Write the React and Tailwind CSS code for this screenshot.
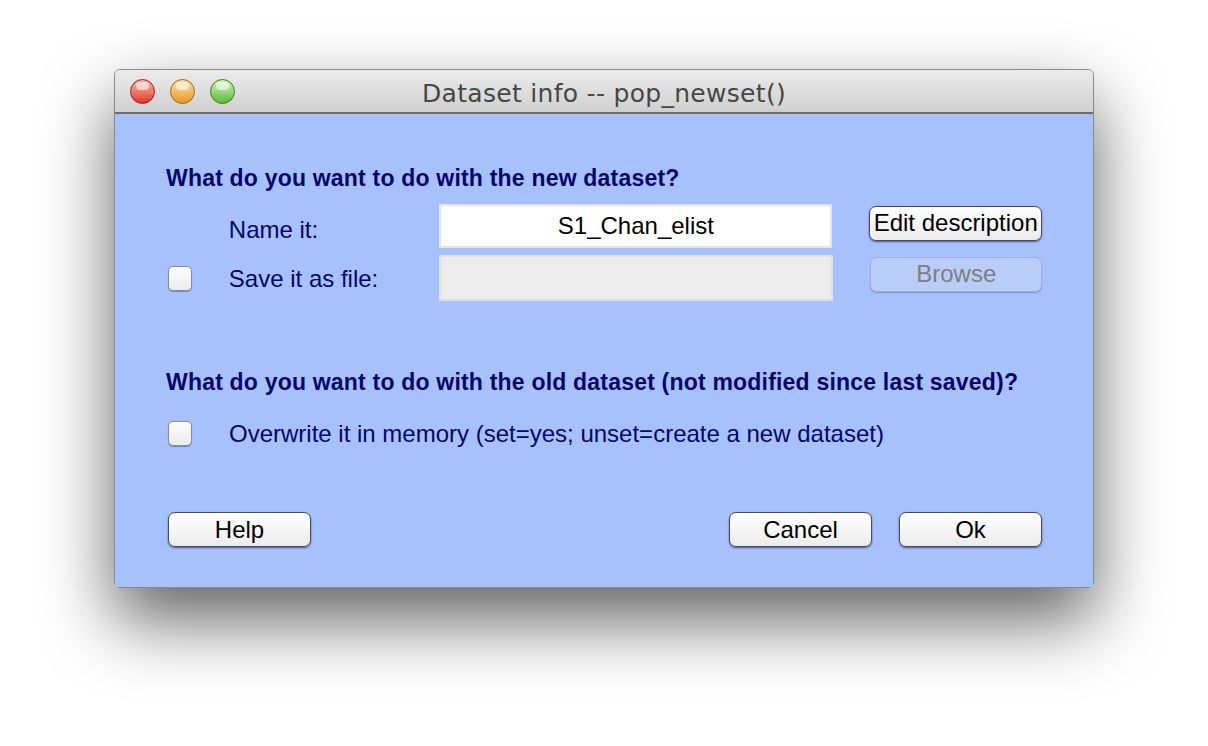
import React from "react";

const navy = "text-[#05056a]";

// mac style push button
function PushButton({ children, className = "", disabled = false }) {
  return (
    <button
      type="button"
      disabled={disabled}
      className={
        "h-[35px] rounded-[7px] text-[24px] leading-none " +
        (disabled
          ? "bg-[#b9cdf8] text-[#7f7f7f] border border-[#9fb1da] shadow-[0_1px_1px_rgba(0,0,40,0.25)] "
          : "bg-gradient-to-b from-[#ffffff] to-[#ececec] text-black border border-[#4a4a5a] shadow-[0_1px_2px_rgba(0,0,40,0.55)] ") +
        className
      }
    >
      {children}
    </button>
  );
}

function Checkbox() {
  return (
    <div className="w-[24px] h-[25px] rounded-[5px] bg-gradient-to-b from-[#ffffff] to-[#ebebeb] border border-[#8a8a9a] shadow-[0_1px_1px_rgba(0,0,40,0.3)]" />
  );
}

function Light({ from, to, ring }) {
  return (
    <div
      className={
        "relative w-[25px] h-[25px] rounded-full border bg-gradient-to-b " +
        from + " " + to + " " + ring
      }
    >
      <div className="absolute left-[5px] top-[2px] w-[13px] h-[8px] rounded-full bg-white/60" />
    </div>
  );
}

export default function App() {
  return (
    <div
      className="w-[1208px] h-[746px] bg-white pt-[69px] pl-[114px] overflow-hidden"
      style={{ fontFamily: '"Liberation Sans", Arial, sans-serif' }}
    >
      <div className="w-[980px] h-[519px] rounded-t-[6px] rounded-b-[4px] flex flex-col shadow-[0_32px_70px_rgba(0,0,0,0.62)] border border-[#8a8a8a]">
        {/* TITLE BAR */}
        <div className="relative h-[44px] flex items-center rounded-t-[6px] bg-gradient-to-b from-[#ececec] to-[#d0d0d0] border-b-2 border-[#6d6d6d]">
          <div className="flex items-center gap-[15px] pl-[15px]">
            <Light from="from-[#ffb0a8]" to="to-[#e0302a]" ring="border-[#a01e1a]" />
            <Light from="from-[#ffe0a0]" to="to-[#e49a20]" ring="border-[#a06a10]" />
            <Light from="from-[#d0f5b0]" to="to-[#5cb838]" ring="border-[#3c7c20]" />
          </div>
          <div
            className="absolute inset-0 flex items-center justify-center pt-[5px] text-[25px] tracking-[0.3px] text-[#474747]"
            style={{ fontFamily: '"DejaVu Sans", "Noto Sans", sans-serif' }}
          >
            Dataset info -- pop_newset()
          </div>
        </div>

        {/* BODY */}
        <div className="flex-1 bg-[#a7c1fd] rounded-b-[4px] pl-[51px] pr-[51px] pt-[52px] flex flex-col">
          <div className={"h-[24px] leading-[24px] text-[23px] tracking-[0.2px] font-bold " + navy}>
            What do you want to do with the new dataset?
          </div>

          <div className="mt-[14px] flex items-center h-[44px]">
            <div className="w-[63px]" />
            <div className={"w-[211px] text-[24px] leading-none pt-[8px] " + navy}>Name it:</div>
            <div className="w-[394px] h-[44px] bg-white border-2 border-[#e4e4e4] flex items-center justify-center text-[24px] text-black">
              S1_Chan_elist
            </div>
            <PushButton className="ml-[37px] w-[173px] -mt-[6px]">Edit description</PushButton>
          </div>

          <div className="mt-[7px] flex items-center h-[46px]">
            <div className="w-[63px] pl-[2px]">
              <Checkbox />
            </div>
            <div className={"w-[211px] text-[24px] leading-none pt-[2px] " + navy}>Save it as file:</div>
            <div className="w-[395px] h-[46px] bg-[#ececec] border-2 border-[#e0e0e0]" />
            <PushButton disabled className="ml-[37px] w-[172px] -mt-[8px]">Browse</PushButton>
          </div>

          <div className={"mt-[69px] h-[24px] leading-[24px] text-[23px] tracking-[0.2px] font-bold " + navy}>
            What do you want to do with the old dataset (not modified since last saved)?
          </div>

          <div className="mt-[26px] flex items-center h-[26px]">
            <div className="w-[63px] pl-[2px]">
              <Checkbox />
            </div>
            <div className={"text-[24px] leading-none pt-[2px] " + navy}>
              Overwrite it in memory (set=yes; unset=create a new dataset)
            </div>
          </div>

          <div className="mt-[66px] flex items-center">
            <PushButton className="ml-[2px] w-[143px]">Help</PushButton>
            <div className="flex-1" />
            <PushButton className="w-[143px]">Cancel</PushButton>
            <PushButton className="ml-[27px] w-[143px]">Ok</PushButton>
          </div>
        </div>
      </div>
    </div>
  );
}
